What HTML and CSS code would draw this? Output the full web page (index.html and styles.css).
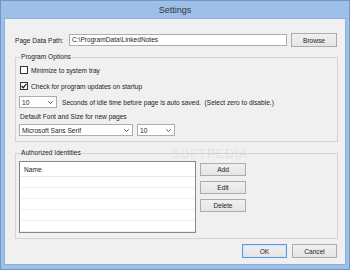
FILE: index.html
```html
<!DOCTYPE html>
<html lang="en">
<head>
    <meta charset="UTF-8">
    <title>Settings</title>
    <link rel="stylesheet" href="styles.css">
</head>
<body>
    <div class="window">
        <div class="titlebar">Settings</div>
        <div class="client">
            <div class="path-row">
                <span class="path-label">Page Data Path:</span>
                <div class="textbox">C:\ProgramData\LinkedNotes</div>
                <button class="btn browse">Browse</button>
            </div>

            <div class="group">
                <div class="group-title">Program Options</div>
                <div class="check first">
                    <span class="box"></span>
                    <span>Minimize to system tray</span>
                </div>
                <div class="check second">
                    <span class="box">
                        <svg width="6" height="6" viewBox="0 0 6 6"><polyline points="0.6,3 2.3,4.8 5.4,0.8" fill="none" stroke="#222" stroke-width="1.3"/></svg>
                    </span>
                    <span>Check for program updates on startup</span>
                </div>
                <div class="idle-row">
                    <div class="combo idle">
                        <span>10</span>
                        <svg width="5" height="3" viewBox="0 0 5 3"><polyline points="0.3,0.3 2.5,2.5 4.7,0.3" fill="none" stroke="#444" stroke-width="0.9"/></svg>
                    </div>
                    <span>Seconds of idle time before page is auto saved.&nbsp; (Select zero to disable.)</span>
                </div>
                <div class="caption">Default Font and Size for new pages</div>
                <div class="font-row">
                    <div class="combo font">
                        <span>Microsoft Sans Serif</span>
                        <svg width="5" height="3" viewBox="0 0 5 3"><polyline points="0.3,0.3 2.5,2.5 4.7,0.3" fill="none" stroke="#444" stroke-width="0.9"/></svg>
                    </div>
                    <div class="combo size">
                        <span>10</span>
                        <svg width="5" height="3" viewBox="0 0 5 3"><polyline points="0.3,0.3 2.5,2.5 4.7,0.3" fill="none" stroke="#444" stroke-width="0.9"/></svg>
                    </div>
                </div>
            </div>

            <div class="group identities">
                <div class="group-title">Authorized Identities</div>
                <div class="ident-body">
                    <div class="listview">
                        <div class="lv-header">Name</div>
                        <div class="lv-row"></div>
                        <div class="lv-row"></div>
                        <div class="lv-row"></div>
                        <div class="lv-row"></div>
                        <div class="lv-row"></div>
                    </div>
                    <div class="side-buttons">
                        <button class="btn">Add</button>
                        <button class="btn">Edit</button>
                        <button class="btn">Delete</button>
                    </div>
                </div>
            </div>

            <div class="footer">
                <button class="btn default">OK</button>
                <button class="btn">Cancel</button>
            </div>
        </div>
        <div class="watermark">SOFTPEDIA</div>
    </div>
</body>
</html>
```

FILE: styles.css
```css
* {
    box-sizing: border-box;
}
body {
    margin: 0;
    font-family: "Liberation Sans", Arial, sans-serif;
    font-size: 6.6px;
    color: #1c1c1c;
    background: #9ebfe8;
}
.window {
    position: relative;
    width: 350px;
    height: 270px;
    background: #9ebfe8;
    border: 1px solid #7196c9;
    padding: 0 4px 5px;
}
.titlebar {
    height: 18px;
    line-height: 18px;
    text-align: center;
    font-size: 9px;
    color: #333;
}
.client {
    height: 245px;
    background: #f0f0f0;
    box-shadow: 0 0 0 1px #8eafdc;
    padding: 14px 7px 0 10px;
}
.path-row {
    display: flex;
    align-items: center;
    height: 14px;
}
.path-label {
    width: 54px;
}
.textbox {
    width: 218px;
    height: 12px;
    line-height: 10px;
    padding-left: 2px;
    background: #fff;
    border: 1px solid #abadb3;
}
.btn {
    width: 46px;
    height: 14px;
    padding: 0;
    font-family: inherit;
    font-size: 6.6px;
    color: #1c1c1c;
    background: linear-gradient(#f0f0f0, #e5e5e5);
    border: 1px solid #acacac;
}
.browse {
    margin-left: 4px;
}
.group {
    margin-top: 10px;
    border: 1px solid #d5d5d5;
    padding: 0 3px 5px;
}
.identities {
    margin-top: 11px;
}
.group-title {
    display: table;
    margin: -5px 0 0 1px;
    padding: 0 1px;
    line-height: 8px;
    background: #f0f0f0;
    color: #222;
}
.check {
    display: flex;
    align-items: center;
    gap: 3px;
    height: 8px;
    margin-left: 1px;
}
.check.first {
    margin-top: 5px;
}
.check.second {
    margin-top: 8px;
}
.box {
    display: flex;
    align-items: center;
    justify-content: center;
    width: 8px;
    height: 8px;
    background: #fff;
    border: 1px solid #333;
}
.idle-row {
    display: flex;
    align-items: center;
    gap: 5px;
    margin-top: 6px;
}
.combo {
    display: flex;
    align-items: center;
    justify-content: space-between;
    height: 12px;
    padding: 0 3px 0 2px;
    background: #fff;
    border: 1px solid #abadb3;
}
.idle {
    width: 38px;
}
.caption {
    margin: 5px 0 0 1px;
    line-height: 8px;
}
.font-row {
    display: flex;
    gap: 4px;
    margin-top: 3px;
}
.font {
    width: 114px;
}
.size {
    width: 38px;
}
.ident-body {
    display: flex;
    align-items: flex-start;
    margin-top: 4px;
}
.listview {
    width: 177px;
    height: 72px;
    background: #fff;
    border: 1px solid #828790;
}
.lv-header {
    height: 15px;
    line-height: 15px;
    padding-left: 4px;
    border-bottom: 1px solid #e8e8e8;
}
.lv-row {
    height: 11px;
    border-bottom: 1px solid #f0f0f0;
}
.side-buttons {
    display: flex;
    flex-direction: column;
    gap: 5px;
    margin: 2px 0 0 4px;
}
.side-buttons .btn {
    height: 13px;
}
.footer {
    display: flex;
    justify-content: flex-end;
    gap: 5px;
    margin-top: 5px;
    padding-right: 1px;
}
.footer .btn {
    width: 45px;
}
.footer .default {
    border-color: #5b9ad6;
    box-shadow: inset 0 0 0 1px #cfe4f7;
}
.watermark {
    position: absolute;
    left: 170px;
    top: 147px;
    font-size: 12px;
    line-height: 12px;
    letter-spacing: 1px;
    color: rgba(190, 190, 190, 0.3);
    pointer-events: none;
}
```
